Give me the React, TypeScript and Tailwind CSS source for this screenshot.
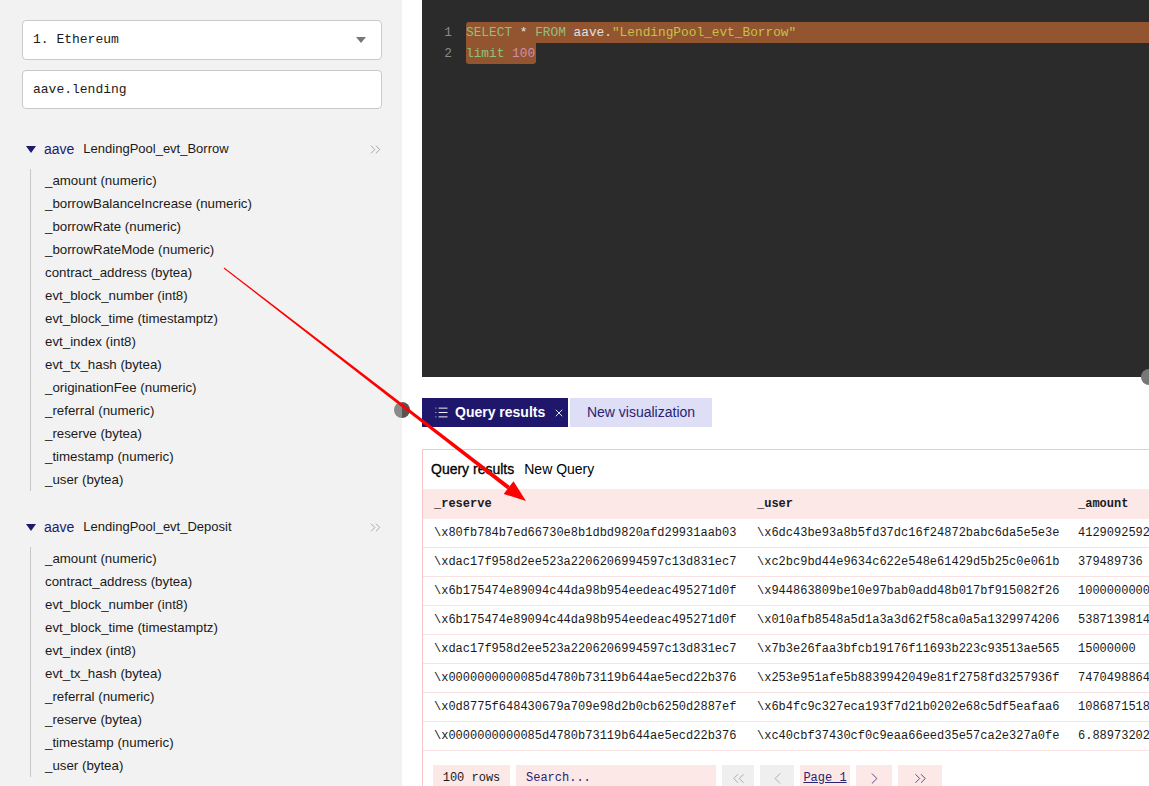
import { ChevronsRight, ChevronsLeft, ChevronLeft, ChevronRight, List, X } from 'lucide-react'

const SANS = "font-['Liberation_Sans','Roboto',sans-serif]"
const MONO = "font-['Liberation_Mono','DejaVu_Sans_Mono',monospace]"

const borrowCols = [
  '_amount (numeric)',
  '_borrowBalanceIncrease (numeric)',
  '_borrowRate (numeric)',
  '_borrowRateMode (numeric)',
  'contract_address (bytea)',
  'evt_block_number (int8)',
  'evt_block_time (timestamptz)',
  'evt_index (int8)',
  'evt_tx_hash (bytea)',
  '_originationFee (numeric)',
  '_referral (numeric)',
  '_reserve (bytea)',
  '_timestamp (numeric)',
  '_user (bytea)',
]

const depositCols = [
  '_amount (numeric)',
  'contract_address (bytea)',
  'evt_block_number (int8)',
  'evt_block_time (timestamptz)',
  'evt_index (int8)',
  'evt_tx_hash (bytea)',
  '_referral (numeric)',
  '_reserve (bytea)',
  '_timestamp (numeric)',
  '_user (bytea)',
]

const rows = [
  ['\\x80fb784b7ed66730e8b1dbd9820afd29931aab03', '\\x6dc43be93a8b5fd37dc16f24872babc6da5e5e3e', '4129092592'],
  ['\\xdac17f958d2ee523a2206206994597c13d831ec7', '\\xc2bc9bd44e9634c622e548e61429d5b25c0e061b', '379489736'],
  ['\\x6b175474e89094c44da98b954eedeac495271d0f', '\\x944863809be10e97bab0add48b017bf915082f26', '1000000000'],
  ['\\x6b175474e89094c44da98b954eedeac495271d0f', '\\x010afb8548a5d1a3a3d62f58ca0a5a1329974206', '5387139814'],
  ['\\xdac17f958d2ee523a2206206994597c13d831ec7', '\\x7b3e26faa3bfcb19176f11693b223c93513ae565', '15000000'],
  ['\\x0000000000085d4780b73119b644ae5ecd22b376', '\\x253e951afe5b8839942049e81f2758fd3257936f', '7470498864'],
  ['\\x0d8775f648430679a709e98d2b0cb6250d2887ef', '\\x6b4fc9c327eca193f7d21b0202e68c5df5eafaa6', '1086871518'],
  ['\\x0000000000085d4780b73119b644ae5ecd22b376', '\\xc40cbf37430cf0c9eaa66eed35e57ca2e327a0fe', '6.88973202'],
]

function TableGroup({ name, cols }: { name: string; cols: string[] }) {
  return (
    <div>
      <div className="flex items-center h-[22px] pl-[4px]">
        <span className="w-0 h-0 border-l-[5px] border-r-[5px] border-t-[7px] border-l-transparent border-r-transparent border-t-[#1e1a6b]" />
        <span className="ml-[8px] text-[14px] text-[#1e1a6b]">aave</span>
        <span className="ml-[9px] text-[13px] text-[#1a1a1a]">{name}</span>
        <ChevronsRight size={17} strokeWidth={1.2} className="ml-auto mr-[-2px] text-[#9a9a9a]" />
      </div>
      <div className="ml-[8px] mt-[9px] border-l border-[#c8c8c8] pl-[14px]">
        {cols.map(c => (
          <div key={c} className="h-[23px] flex items-center text-[13.3px] text-[#1a1a1a]">
            {c}
          </div>
        ))}
      </div>
    </div>
  )
}

export default function App() {
  return (
    <div className={`relative w-[1149px] h-[786px] overflow-hidden bg-white flex ${SANS}`}>
      {/* Sidebar */}
      <div className="relative w-[402px] shrink-0 bg-[#f2f2f2] pl-[22px] pr-[20px] pt-[20px]">
        <div className="h-[40px] bg-white border border-[#c9c9c9] rounded-[4px] flex items-center pl-[10px] pr-[15px]">
          <span className={`${MONO} text-[13px] text-[#1a1a1a]`}>1. Ethereum</span>
          <span className="ml-auto w-0 h-0 border-l-[5px] border-r-[5px] border-t-[6px] border-l-transparent border-r-transparent border-t-[#777]" />
        </div>
        <div className="mt-[10px] h-[39px] bg-white border border-[#c9c9c9] rounded-[4px] flex items-center pl-[10px]">
          <span className={`${MONO} text-[13px] text-[#1a1a1a]`}>aave.lending</span>
        </div>
        <div className="mt-[29px] flex flex-col gap-[25px]">
          <TableGroup name="LendingPool_evt_Borrow" cols={borrowCols} />
          <TableGroup name="LendingPool_evt_Deposit" cols={depositCols} />
        </div>
        <div className="absolute right-[-8px] top-[402px] w-[16px] h-[16px] rounded-full bg-[linear-gradient(90deg,#8a8a8a_50%,#555_50%)]" />
      </div>

      {/* Main */}
      <div className="flex-1 pl-[20px] flex flex-col min-w-0">
        <div className={`relative shrink-0 h-[377px] bg-[#2b2b2b] pt-[22px] ${MONO} text-[12.8px]`}>
          <div className="flex h-[21px] items-center">
            <span className="w-[30px] text-right text-[#8a8a8a]">1</span>
            <div className="ml-[14px] flex-1 h-full flex items-center bg-[#93552f] rounded-tl-[3px]">
              <span className="text-[#8fc07c]">SELECT</span>
              <span className="text-[#e6e6e6]">&nbsp;*&nbsp;</span>
              <span className="text-[#8fc07c]">FROM</span>
              <span className="text-[#e0e0e0]">&nbsp;aave.</span>
              <span className="text-[#c4c24a]">"LendingPool_evt_Borrow"</span>
            </div>
          </div>
          <div className="flex h-[21px] items-center">
            <span className="w-[30px] text-right text-[#8a8a8a]">2</span>
            <div className="ml-[14px] h-full flex items-center bg-[#93552f] rounded-b-[3px] pr-[1px]">
              <span className="text-[#8fc07c]">limit</span>
              <span>&nbsp;</span>
              <span className="text-[#d08fab]">100</span>
            </div>
          </div>
          <div className="absolute right-[-8px] bottom-[-8px] w-[16px] h-[16px] rounded-full bg-[#777]" />
        </div>

        {/* Tabs */}
        <div className="shrink-0 mt-[21px] flex h-[29px] gap-[2px]">
          <div className="w-[146px] bg-[#1e176b] text-white flex items-center pl-[12px]">
            <List size={15} strokeWidth={1.5} />
            <span className="ml-[6px] text-[14px] font-bold">Query results</span>
            <X size={12} strokeWidth={1.75} className="ml-[8px]" />
          </div>
          <div className="w-[142px] bg-[#dedef7] text-[#2a2370] flex items-center justify-center text-[14px]">
            New visualization
          </div>
        </div>

        {/* Results */}
        <div className="shrink-0 mt-[22px] border-l border-t border-[#f7c5c5]">
          <div className="h-[39px] flex items-center pl-[8px] text-[14px] text-[#000]">
            <span className="[-webkit-text-stroke:0.3px_#000]">Query results</span>
            <span className="ml-[10px]">New Query</span>
          </div>
          <div className={`${MONO} text-[12px] text-[#1a1a1a]`}>
            <div className="flex h-[30px] items-center bg-[#fde8e8] font-bold">
              <span className="w-[334px] pl-[11px] shrink-0">_reserve</span>
              <span className="w-[321px] shrink-0">_user</span>
              <span>_amount</span>
            </div>
            {rows.map((r, i) => (
              <div key={i} className="flex h-[29px] items-center border-b border-[#fbe2e2] whitespace-nowrap">
                <span className="w-[334px] pl-[11px] shrink-0">{r[0]}</span>
                <span className="w-[321px] shrink-0">{r[1]}</span>
                <span>{r[2]}</span>
              </div>
            ))}
            <div className="mt-[14px] pl-[10px] flex gap-[6px] h-[26px]">
              <div className="w-[77px] bg-[#fde8e8] flex items-center justify-center text-[#1a1a1a]">100 rows</div>
              <div className="w-[200px] bg-[#fde8e8] flex items-center pl-[10px] text-[#2a2370]">Search...</div>
              <div className="w-[32px] bg-[#efefef] flex items-center justify-center text-[#999]">
                <ChevronsLeft size={19} strokeWidth={1} />
              </div>
              <div className="w-[34px] bg-[#efefef] flex items-center justify-center text-[#999]">
                <ChevronLeft size={19} strokeWidth={1} />
              </div>
              <div className="w-[50px] bg-[#fde8e8] flex items-center justify-center text-[#2a2370] underline">Page 1</div>
              <div className="w-[36px] bg-[#fde8e8] flex items-center justify-center text-[#2a2370]">
                <ChevronRight size={19} strokeWidth={1} />
              </div>
              <div className="w-[44px] bg-[#fde8e8] flex items-center justify-center text-[#2a2370]">
                <ChevronsRight size={19} strokeWidth={1} />
              </div>
            </div>
          </div>
        </div>
      </div>

      {/* Annotation arrow */}
      <svg className="absolute inset-0 pointer-events-none" width="1149" height="786" viewBox="0 0 1149 786">
        <polygon points="223.7,268.4 224.3,267.6 509.8,486 507.4,489.2" fill="#ff0000" />
        <polygon points="526,501 503.7,493.9 513.5,481.3" fill="#ff0000" />
      </svg>
    </div>
  )
}
